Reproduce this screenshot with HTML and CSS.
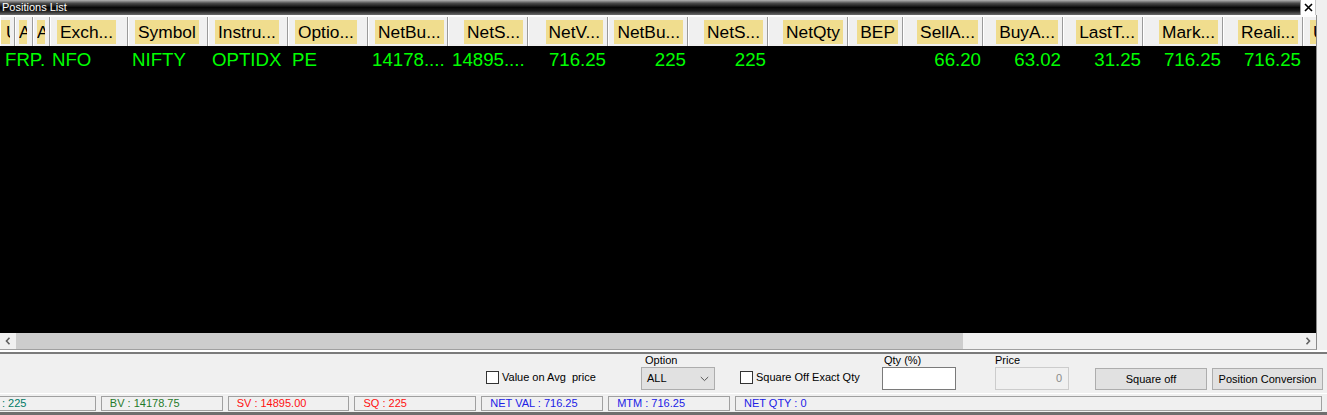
FILE: index.html
```html
<!DOCTYPE html>
<html lang="en">
<head>
    <meta charset="UTF-8">
    <title>Positions List</title>
    <link rel="stylesheet" href="styles.css">
</head>
<body>
<div id="win">
    <div class="titleBar">
        <span class="title">Positions List</span>
        <span class="closeBtn">
            <svg width="9" height="9" viewBox="0 0 9 9"><path d="M1 1 L8 8 M8 1 L1 8" stroke="#000" stroke-width="1.6"/></svg>
        </span>
        <span class="titleRest"></span>
    </div>

    <div class="grid">
        <div class="viewport">
            <div class="cols hdr">
                <div class="hc tiny t1"><span>U</span></div>
                <div class="hc tiny t2"><span>A</span></div>
                <div class="hc tiny t3"><span>A</span></div>
                <div class="hc"><span>Exch...</span></div>
                <div class="hc"><span>Symbol</span></div>
                <div class="hc"><span>Instru...</span></div>
                <div class="hc"><span>Optio...</span></div>
                <div class="hc"><span>NetBu...</span></div>
                <div class="hc r"><span>NetS...</span></div>
                <div class="hc r"><span>NetV...</span></div>
                <div class="hc r"><span>NetBu...</span></div>
                <div class="hc r"><span>NetS...</span></div>
                <div class="hc r"><span>NetQty</span></div>
                <div class="hc r"><span>BEP</span></div>
                <div class="hc r"><span>SellA...</span></div>
                <div class="hc r"><span>BuyA...</span></div>
                <div class="hc r"><span>LastT...</span></div>
                <div class="hc r"><span>Mark...</span></div>
                <div class="hc r"><span>Reali...</span></div>
                <div class="hc"><span>Unre...</span></div>
            </div>
            <div class="cols row">
                <div class="dc first">FRP.</div>
                <div class="dc exch">NFO</div>
                <div class="dc">NIFTY</div>
                <div class="dc">OPTIDX</div>
                <div class="dc">PE</div>
                <div class="dc">14178....</div>
                <div class="dc">14895....</div>
                <div class="dc r">716.25</div>
                <div class="dc r">225</div>
                <div class="dc r">225</div>
                <div class="dc r"></div>
                <div class="dc r"></div>
                <div class="dc r">66.20</div>
                <div class="dc r">63.02</div>
                <div class="dc r">31.25</div>
                <div class="dc r">716.25</div>
                <div class="dc r">716.25</div>
                <div class="dc r"></div>
            </div>
        </div>
        <div class="hScroll">
            <span class="arrow">
                <svg width="6" height="8" viewBox="0 0 6 8"><path d="M4.5 0.8 L1.5 4 L4.5 7.2" fill="none" stroke="#606060" stroke-width="1.6"/></svg>
            </span>
            <span class="thumb"></span>
            <span class="track"></span>
            <span class="arrow">
                <svg width="6" height="8" viewBox="0 0 6 8"><path d="M1.5 0.8 L4.5 4 L1.5 7.2" fill="none" stroke="#606060" stroke-width="1.6"/></svg>
            </span>
        </div>
    </div>

    <div class="panel">
        <label class="chk chk1"><span class="box"></span><span class="txt">Value on Avg&nbsp; price</span></label>
        <div class="field fOption">
            <p class="lbl">Option</p>
            <div class="select">
                <span>ALL</span>
                <svg width="9" height="6" viewBox="0 0 9 6"><path d="M0.8 1 L4.5 4.6 L8.2 1" fill="none" stroke="#555" stroke-width="1"/></svg>
            </div>
        </div>
        <label class="chk chk2"><span class="box"></span><span class="txt">Square Off Exact Qty</span></label>
        <div class="field fQty">
            <p class="lbl">Qty (%)</p>
            <div class="input"></div>
        </div>
        <div class="field fPrice">
            <p class="lbl">Price</p>
            <div class="input disabled">0</div>
        </div>
        <div class="btn btnSq">Square off</div>
        <div class="btn btnConv">Position Conversion</div>
    </div>

    <div class="status">
        <span class="sb teal">BQ : 225</span>
        <span class="sb green">BV : 14178.75</span>
        <span class="sb red">SV : 14895.00</span>
        <span class="sb red">SQ : 225</span>
        <span class="sb blue">NET VAL : 716.25</span>
        <span class="sb blue">MTM : 716.25</span>
        <span class="sb blue last">NET QTY : 0</span>
    </div>
</div>
</body>
</html>
```

FILE: styles.css
```css
*{ margin: 0; padding: 0; box-sizing: border-box; }
html, body{ width: 1327px; height: 415px; overflow: hidden; }
body{ background: #f0f0f0; font: 11px/13px "Liberation Sans", Arial, sans-serif; color: #000; }

#win{ width: 1327px; height: 415px; overflow: hidden; }

/* title bar */
.titleBar{ display: flex; height: 15px; }
.titleBar .title{ flex: 1; padding-left: 2px; line-height: 15px; color: #fff;
    background: linear-gradient(#b4b4b4 0, #4a4a4a 22%, #080808 50%, #1c1c1c 72%, #6c6c6c 100%); }
.titleBar .closeBtn{ width: 15px; display: flex; align-items: center; justify-content: center; background: #fff; border-left: 1px solid #a0a0a0; }
.titleBar .titleRest{ width: 12px; background: #f0f0f0; border-left: 1px solid #c8c8c8; }

/* grid */
.grid{ width: 1317px; border-right: 1px solid #8a8a8a; border-bottom: 1px solid #a0a0a0; }
.viewport{ height: 318px; background: #000; overflow: hidden; }
.cols{ display: grid; grid-template-columns: 15px 18px 17px 78px repeat(9, 80px) 55px repeat(6, 80px); }

.hdr{ height: 31px; border-top: 2px solid #fdfdfd; background: #f0f0f0; }
.hc{ padding: 3px 0 0 6px; border-left: 1px solid #fff; border-right: 1px solid #9a9a9a; overflow: hidden; white-space: nowrap;
    font: 17.33px/24px "Liberation Sans", Arial, sans-serif; }
.hc span{ display: inline-block; height: 24px; padding: 0 3px; background: #f0dd8e; }
.hc.r{ padding-left: 0; padding-right: 4px; text-align: right; }
.hc.tiny{ padding-left: 0; }
.hc.tiny span{ width: 9px; overflow: hidden; padding: 0; text-indent: 5px; }
.hc.t2 span, .hc.t3 span{ width: 8px; margin-left: 3px; text-indent: 0; }

.row{ height: 28px; color: #00ff00; font: 18.67px/28px "Liberation Sans", Arial, sans-serif; }
.dc{ padding-left: 4px; overflow: hidden; white-space: nowrap; }
.dc.first{ grid-column: span 3; padding-left: 5px; }
.dc.exch{ padding-left: 2px; }
.dc.r{ padding-left: 0; padding-right: 2px; text-align: right; }

.hScroll{ display: flex; height: 16px; background: #f0f0f0; }
.hScroll .arrow{ width: 16px; display: flex; align-items: center; justify-content: center; }
.hScroll .thumb{ width: 947px; background: #cdcdcd; }
.hScroll .track{ flex: 1; }

/* controls panel */
.panel{ display: flex; height: 41px; margin-top: 2px; padding-left: 486px; border-top: 2px solid #7a7a7a; box-shadow: 0 -2px 0 #fff; }
.chk{ display: flex; align-items: center; height: 13px; margin-top: 17px; }
.chk .box{ width: 13px; height: 13px; background: #fff; border: 1px solid #333; }
.chk .txt{ margin-left: 3px; white-space: nowrap; color: #000; }
.chk1{ width: 155px; }
.chk2{ width: 142px; }

.field .lbl{ height: 13px; line-height: 13px; white-space: nowrap; }
.fOption{ width: 99px; }
.fOption .lbl{ padding-left: 4px; }
.fQty{ width: 113px; }
.fQty .lbl{ padding-left: 2px; }
.fPrice{ width: 100px; }

.select{ display: flex; align-items: center; justify-content: space-between; width: 74px; height: 23px; padding: 0 5px 0 5px;
    background: #e1e1e1; border: 1px solid #adadad; }
.input{ width: 74px; height: 23px; background: #fff; border: 1px solid #7a7a7a; }
.input.disabled{ background: #f0f0f0; border-color: #cccccc; color: #8a8a8a; text-align: right; padding-right: 6px; line-height: 21px; }

.btn{ height: 22px; margin-top: 14px; line-height: 20px; text-align: center; white-space: nowrap; background: #e1e1e1; border: 1px solid #adadad; }
.btnSq{ width: 112px; }
.btnConv{ width: 111px; margin-left: 5px; }

/* status bar */
.status{ display: flex; height: 22px; margin-left: -26px; padding-top: 2px; border-top: 1px solid #fff; border-bottom: 3px solid #6e6e6e; }
.sb{ width: 122px; height: 15px; margin-right: 5px; padding-left: 8px; line-height: 13px; white-space: nowrap; border: 1px solid #a0a0a0; }
.sb.last{ width: 588px; }
.teal{ color: #007a66; }
.green{ color: #1f7a2a; }
.red{ color: #ff1010; }
.blue{ color: #2020e6; }
```
